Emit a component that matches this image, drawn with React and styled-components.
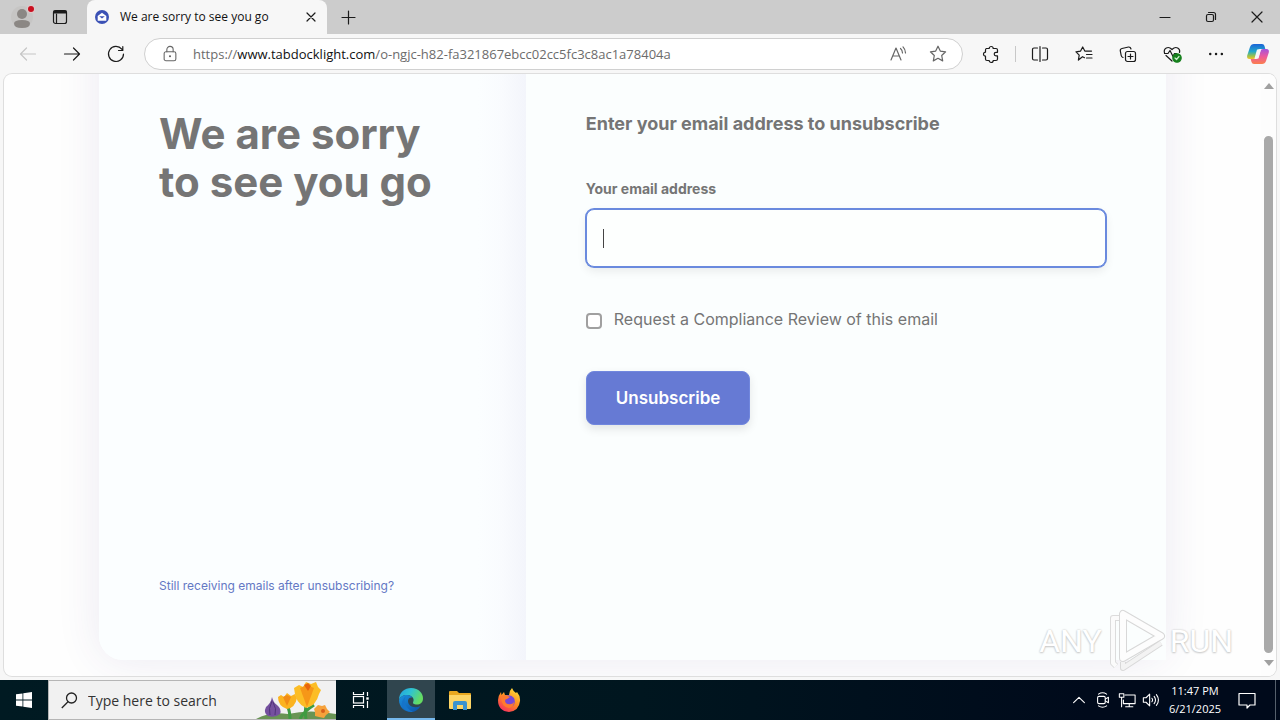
import styled, { createGlobalStyle, css } from "styled-components";

const GlobalStyle = createGlobalStyle`
  * {
    box-sizing: border-box;
  }
  body {
    margin: 0;
    font-family: "Open Sans", "Noto Sans", sans-serif;
  }
  h1, h2, p {
    margin: 0;
  }
  button {
    border: 0;
    padding: 0;
    background: none;
    font: inherit;
    color: inherit;
  }
`;

const Screen = styled.div`
  height: 100vh;
  display: flex;
  flex-direction: column;
  overflow: hidden;
  background-color: #f7f7f7;
`;

/* browser chrome */
const TabStrip = styled.div`
  height: 34px;
  flex-shrink: 0;
  display: flex;
  background-color: #cccccc;
`;

const IconButton = styled.button`
  width: ${(props) => props.$width || 44}px;
  height: ${(props) => props.$height || 34}px;
  flex-shrink: 0;
  display: flex;
  align-items: center;
  justify-content: center;
  color: ${(props) => props.$color || "#1b1b1b"};
`;

const Tab = styled.div`
  width: 240px;
  display: flex;
  align-items: center;
  padding-left: 7px;
  margin-left: 11px;
  background-color: #f7f7f7;
  border-radius: 8px 8px 0 0;
`;

const TabTitle = styled.span`
  flex: 1;
  margin-left: 10px;
  font-size: 12px;
  line-height: 16px;
  color: #111111;
  white-space: nowrap;
`;

const Spacer = styled.div`
  flex: 1;
`;

const Toolbar = styled.div`
  height: 40px;
  flex-shrink: 0;
  display: flex;
  align-items: center;
  padding: 0 2px 0 6px;
`;

const AddressBar = styled.div`
  flex: 1;
  height: 32px;
  margin: 0 6px;
  padding: 0 4px 0 16px;
  display: flex;
  align-items: center;
  background-color: white;
  border: 1px solid #d0d0d0;
  border-radius: 16px;
  color: #666666;
`;

const Url = styled.div`
  flex: 1;
  margin-left: 14px;
  font-size: 13px;
  line-height: 20px;
  color: #6c6c6c;
  white-space: nowrap;
  outline: none;

  b {
    font-weight: 400;
    color: #111111;
  }
`;

const Separator = styled.div`
  width: 1px;
  height: 16px;
  margin: 0 2px;
  background-color: #c8c8c8;
`;

/* page */
const Frame = styled.main`
  flex: 1;
  min-height: 0;
  margin: 0 4px 4px;
  display: flex;
  position: relative;
  overflow: hidden;
  background-color: #fefefe;
  border-radius: 8px;
  box-shadow: 0 0 0 1px #dedede;
`;

const Page = styled.div`
  flex: 1;
  display: flex;
  justify-content: center;
  overflow: hidden;
`;

const Card = styled.div`
  width: 85%;
  max-width: 1067px;
  margin-top: -60px;
  margin-bottom: 16px;
  display: grid;
  grid-template-columns: 2fr 3fr;
  border-radius: 24px;
  background-color: #fbfeff;
  box-shadow: 0 0 44px rgba(70, 50, 130, 0.1);
`;

const Side = styled.section`
  padding: 96px 60px 64px;
  display: flex;
  flex-direction: column;
  justify-content: space-between;
  align-items: flex-start;
  overflow: hidden;
  border-radius: 24px 0 0 24px;
  background-image: linear-gradient(to left, #f3f5fb, #f9fbfe 24px, #fbfeff 48px);
  font-family: Inter, sans-serif;
`;

const Title = styled.h1`
  font-weight: 700;
  font-size: 42px;
  line-height: 48px;
  color: #757575;
  white-space: nowrap;
`;

const HelpLink = styled.a`
  font-size: 12px;
  line-height: 20px;
  color: #6478c4;
  text-decoration: none;
`;

const Form = styled.form`
  padding: 96px 60px 64px;
  background-color: #fbfefe;
  font-family: Inter, sans-serif;
  color: #757575;
`;

const FormTitle = styled.h2`
  font-weight: 700;
  font-size: 18px;
  line-height: 28px;
`;

const Label = styled.label`
  display: block;
  margin: 41px 0 10px;
  font-weight: 700;
  font-size: 14px;
  line-height: 20px;
`;

const Field = styled.div`
  position: relative;
`;

const EmailInput = styled.input`
  display: block;
  width: 100%;
  height: 58px;
  padding: 0 16px;
  font: 16px Inter, sans-serif;
  color: #555555;
  background-color: #fdfffe;
  border: 1px solid #6a8ade;
  border-radius: 8px;
  outline: none;
  caret-color: transparent;
  box-shadow: 0 0 0 1px #6a8ade, 0 4px 10px rgba(0, 0, 0, 0.08);
`;

const Caret = styled.i`
  position: absolute;
  left: 17px;
  top: 20px;
  width: 1px;
  height: 19px;
  background-color: #444444;
`;

const CheckRow = styled.label`
  margin: 40px 0;
  display: flex;
  align-items: center;
  font-size: 16px;
  line-height: 24px;
`;

const Checkbox = styled.input`
  appearance: none;
  width: 16px;
  height: 16px;
  margin: 4px 12px 0 0;
  background-color: white;
  border: 2px solid #a0a0a0;
  border-radius: 4px;
`;

const SubmitButton = styled.button`
  height: 54px;
  padding: 0 29px;
  font-weight: 600;
  font-size: 17px;
  color: white;
  background-color: #667ad4;
  border: 1px solid #7187de;
  border-radius: 8px;
  box-shadow: 0 4px 10px rgba(0, 0, 0, 0.1);
`;

const Scrollbar = styled.div`
  width: 15px;
  padding: 9px 0 10px;
  display: flex;
  flex-direction: column;
  align-items: center;
  background-color: #fdfdfd;
`;

const Arrow = styled.div`
  border: 5px solid transparent;
  ${(props) =>
    props.$down
      ? css`
          border-top: 6px solid #a0a0a0;
          border-bottom: 0;
        `
      : css`
          border-bottom: 6px solid #a0a0a0;
          border-top: 0;
        `}
`;

const Thumb = styled.div`
  flex: 1;
  width: 9px;
  margin: 47px 0 7px;
  border-radius: 5px;
  background-color: #a9a9a9;
`;

const Watermark = styled.div`
  position: absolute;
  right: 43px;
  bottom: 2px;
  height: 66px;
  display: flex;
  align-items: center;
  gap: 4px;
  font-family: Roboto, sans-serif;
  font-size: 32px;
  color: #ffffff;
  text-shadow: 0 0 2px #c0c0c0, 0 1px 2px #cccccc;
  pointer-events: none;
`;

/* taskbar */
const Taskbar = styled.footer`
  height: 40px;
  flex-shrink: 0;
  display: flex;
  background-image: linear-gradient(to right, #001a22, #00161f 50%, #000a1b 85%);
  color: white;
`;

const TaskButton = styled(IconButton)`
  width: ${(props) => props.$width || 49}px;
  height: 40px;
  color: white;
  ${(props) =>
    props.$active &&
    css`
      background-color: #30454e;
      box-shadow: inset 0 -2px 0 #76b9ed;
    `}
`;

const SearchBox = styled.label`
  width: 288px;
  display: flex;
  align-items: center;
  padding-left: 12px;
  overflow: hidden;
  background-color: #f1f1f1;
  border: 1px solid #b5b5b5;
  border-right: 0;
  color: #222222;
`;

const SearchInput = styled.input`
  flex: 1;
  min-width: 0;
  margin-left: 10px;
  padding: 0;
  border: 0;
  outline: none;
  background: none;
  font: 14px "Open Sans", sans-serif;

  &::placeholder {
    color: #333333;
    opacity: 1;
  }
`;

const Clock = styled.time`
  width: 64px;
  text-align: center;
  font-size: 11px;
  line-height: 18px;
  padding-top: 2px;
  white-space: nowrap;
`;

const ShowDesktop = styled.button`
  width: 5px;
  margin-left: 8px;
  border-left: 1px solid #55606c;
`;

function Line({ size = 20, width = 1.2, children }) {
  return (
    <svg
      width={size}
      height={size}
      viewBox="0 0 20 20"
      fill="none"
      stroke="currentColor"
      strokeWidth={width}
      strokeLinecap="round"
      strokeLinejoin="round"
      aria-hidden="true"
    >
      {children}
    </svg>
  );
}

const STAR = "M10 2.2l2.3 4.9 5.3.7-3.9 3.7 1 5.4-4.7-2.6-4.7 2.6 1-5.4-3.9-3.7 5.3-.7z";

function Tabs() {
  return (
    <TabStrip>
      <IconButton aria-label="Profile">
        <svg width="26" height="26" viewBox="0 0 26 26">
          <circle cx="13" cy="13" r="11" fill="#c6c5c4" />
          <circle cx="13" cy="10" r="5" fill="#8b8784" />
          <path d="M5 19.5Q5 16 13 16t8 3.5Q21 24 13 24T5 19.500z" fill="#8b8784" />
          <circle cx="22" cy="5" r="4" fill="#e0c8c8" />
          <circle cx="22" cy="5" r="3" fill="#c90f1f" />
        </svg>
      </IconButton>
      <IconButton $width={32} aria-label="Tab actions">
        <Line width={1.2}>
          <rect x="3.500" y="3.500" width="13" height="13" rx="2" />
          <path d="M3.500 5h13" strokeWidth="3" strokeLinecap="butt" />
          <path d="M6.500 7v9" />
        </Line>
      </IconButton>
      <Tab>
        <svg width="16" height="16" viewBox="0 0 16 16">
          <circle cx="8" cy="8" r="7" fill="#3b51b5" />
          <path d="M3.700 7L8 3.800 12.300 7v4.700H3.700z" fill="white" />
          <path d="M5.200 7.300L8 9.500l2.800-2.200z" fill="#3b51b5" />
        </svg>
        <TabTitle>We are sorry to see you go</TabTitle>
        <IconButton $width={32} aria-label="Close tab">
          <Line>
            <path d="M6 6l8 8M14 6l-8 8" />
          </Line>
        </IconButton>
      </Tab>
      <IconButton $width={42} aria-label="New tab">
        <Line>
          <path d="M10.500 4v13M4 10.500h13" />
        </Line>
      </IconButton>
      <Spacer />
      <IconButton $width={46} aria-label="Minimize">
        <Line>
          <path d="M5 10.500h10" />
        </Line>
      </IconButton>
      <IconButton $width={46} aria-label="Restore">
        <Line>
          <rect x="5.500" y="7.500" width="7" height="7" rx="1.500" />
          <path d="M7.500 5.500h5q2 0 2 2V12.500" />
        </Line>
      </IconButton>
      <IconButton $width={46} aria-label="Close">
        <Line>
          <path d="M5 5l10 10M15 5L5 15" />
        </Line>
      </IconButton>
    </TabStrip>
  );
}

function BrowserToolbar() {
  return (
    <Toolbar>
      <IconButton $color="#c6c6c6" aria-label="Back">
        <Line>
          <path d="M17.500 10H2.500M8.500 4l-6 6 6 6" />
        </Line>
      </IconButton>
      <IconButton aria-label="Forward">
        <Line>
          <path d="M2.500 10h15M11.500 4l6 6-6 6" />
        </Line>
      </IconButton>
      <IconButton aria-label="Refresh">
        <Line>
          <path d="M17.500 10A7.500 7.500 0 1 1 15.800 5.200L16.500 6M16.800 2.500V6.500H12.500" />
        </Line>
      </IconButton>
      <AddressBar>
        <Line size={18}>
          <rect x="3.500" y="7.500" width="13" height="10" rx="2" />
          <path d="M6.500 7.500V5a3.500 3.500 0 0 1 7 0v2.500" />
          <circle cx="10" cy="12.500" r=".6" fill="currentColor" />
        </Line>
        <Url contentEditable suppressContentEditableWarning role="textbox" aria-label="Address" spellCheck={false}>
          https://<b>www.tabdocklight.com</b>/o-ngjc-h82-fa321867ebcc02cc5fc3c8ac1a78404a
        </Url>
        <IconButton $width={40} $height={30} $color="#666666" aria-label="Read aloud">
          <Line>
            <path d="M3 16L8 4l5 12M5 12h6M12.500 4.500q2 1.800 2 4.500M15 2.800q2.500 2.500 2.500 6.200" />
          </Line>
        </IconButton>
        <IconButton $width={40} $height={30} $color="#666666" aria-label="Add to favorites">
          <Line>
            <path d={STAR} />
          </Line>
        </IconButton>
      </AddressBar>
      <IconButton aria-label="Extensions">
        <Line>
          <path d="M5.500 4.500h2.700a2 2 0 0 1 4 0H15a1.500 1.500 0 0 1 1.500 1.500v2.300H15a1.800 1.800 0 0 0 0 3.600h1.500V15a1.500 1.500 0 0 1-1.500 1.500h-2.800a2 2 0 0 1-4 0H6A1.500 1.500 0 0 1 4.500 15v-2.800a2 2 0 0 1 0-4V6a1.500 1.500 0 0 1 1-1.500z" />
        </Line>
      </IconButton>
      <Separator />
      <IconButton aria-label="Split screen">
        <Line>
          <path d="M7.500 4H4A1.500 1.500 0 0 0 2.500 5.500v9A1.500 1.500 0 0 0 4 16h3.500M12.500 4H16A1.500 1.500 0 0 1 17.500 5.500v9A1.500 1.500 0 0 1 16 16h-3.500M10 2.500v15" />
        </Line>
      </IconButton>
      <IconButton aria-label="Favorites">
        <Line>
          <path d="M10.500 13.700L8.500 12.700 4.400 16l.8-4.900L2 7.800l4.600-.7L8.700 3l2.100 4.100h6.700M12.500 10.500h5.500M12.500 14h5.500" />
        </Line>
      </IconButton>
      <IconButton aria-label="Collections">
        <Line>
          <rect x="7.500" y="7.500" width="10" height="10" rx="2" />
          <path d="M12.500 10v5M10 12.500h5M5 13.500Q3.500 13 3.200 11.500L2.300 6.800Q2 5 4 4.500L10.500 3Q12.500 2.800 13 5" />
        </Line>
      </IconButton>
      <IconButton aria-label="Browser essentials">
        <Line>
          <path d="M2.500 9Q1.500 5.500 4.300 4T10 5.500Q13 2.500 15.700 4t1.800 4.500M4 11.500l6 5.500M2.500 9.500h3.500l2-3 3 6 1.500-3h2" />
          <circle cx="15" cy="14" r="4.200" fill="#16801d" stroke="#16801d" />
          <path d="M13 14l1.500 1.500L17 12.500" stroke="#c9efcb" />
        </Line>
      </IconButton>
      <IconButton aria-label="Settings and more">
        <Line>
          <path d="M4.200 10h.1M10 10h.1M15.800 10h.1" strokeWidth="2.400" />
        </Line>
      </IconButton>
      <IconButton $width={40} aria-label="Copilot">
        <svg width="24" height="24" viewBox="0 0 24 24">
          <defs>
            <linearGradient id="cool" x1="0" y1="0" x2="0" y2="1">
              <stop offset="0" stopColor="#1a63d8" />
              <stop offset=".5" stopColor="#22a9c9" />
              <stop offset=".8" stopColor="#9bc34a" />
              <stop offset="1" stopColor="#f5c12c" />
            </linearGradient>
            <linearGradient id="warm" x1="0" y1="0" x2="0" y2="1">
              <stop offset="0" stopColor="#a353dd" />
              <stop offset=".5" stopColor="#ed5a9c" />
              <stop offset="1" stopColor="#fb7f4d" />
            </linearGradient>
          </defs>
          <path d="M8 2h8q2 0 2.500 2l.8 3H14q-2 0-2.600 2l-2 6.500Q9 17 7 17H3.500Q.5 17 1.200 13.500L4 5Q5 2 8 2z" fill="url(#cool)" />
          <path d="M16 22H8q-2 0-2.500-2l-.8-3H10q2 0 2.600-2l2-6.500Q15 7 17 7h3.500q3 0 2.300 3.500L20 19q-1 3-4 3z" fill="url(#warm)" />
          <path d="M11 7.500h4l-2.500 9h-4z" fill="#f7f7f7" />
        </svg>
      </IconButton>
    </Toolbar>
  );
}

function Unsubscribe() {
  return (
    <Card>
      <Side>
        <Title>
          We are sorry
          <br />
          to see you go
        </Title>
        <HelpLink href="#help">Still receiving emails after unsubscribing?</HelpLink>
      </Side>
      <Form onSubmit={(e) => e.preventDefault()}>
        <FormTitle>Enter your email address to unsubscribe</FormTitle>
        <Label htmlFor="email">Your email address</Label>
        <Field>
          <EmailInput id="email" type="email" />
          <Caret />
        </Field>
        <CheckRow>
          <Checkbox type="checkbox" />
          Request a Compliance Review of this email
        </CheckRow>
        <SubmitButton type="submit">Unsubscribe</SubmitButton>
      </Form>
    </Card>
  );
}

function PlayLogo() {
  return (
    <svg width="60" height="66" viewBox="0 0 60 66" fill="none" strokeLinejoin="round">
      <path d="M13 10H7v45l3 3" stroke="#dcdcdc" strokeWidth="6" />
      <path d="M13 10H7v45l3 3" stroke="#fbfbfb" strokeWidth="4" />
      <path d="M17 6v44l38-22z" stroke="#d8d8d8" strokeWidth="8" />
      <path d="M17 6v44l38-22z" stroke="#fdfdfd" strokeWidth="6" />
      <path d="M17 54v6l38-25" stroke="#d8d8d8" strokeWidth="6" />
      <path d="M17 54v6l38-25" stroke="#f3f3f3" strokeWidth="4" />
    </svg>
  );
}

function Flowers() {
  return (
    <svg width="80" height="38" viewBox="0 0 80 38">
      <path d="M0 38Q14 30 32 33 54 28 80 33v5z" fill="#699454" />
      <path d="M34 38Q34 30 31 24M50 38Q48 27 52 17M44 38Q47 31 58 24" stroke="#3f9b42" strokeWidth="3" fill="none" />
      <path d="M16 16q-1 6-6 10-3 6 2 9 7 2 12-2 2-5-3-9-4-3-5-8z" fill="#75509f" />
      <path d="M16 20q-4 8-2 14M17 21q4 7 2 13" stroke="#4f3479" fill="none" />
      <path d="M22 16l3-2 3 2 3-4 4 3 4-2 2 4q-2 10-10 11-9-3-9-12z" fill="#fbb320" />
      <path d="M27 16l4 9 4-9-4-2z" fill="#f18c17" />
      <path d="M38 7l5-3 4 2 3-5 5 2 5-2 2 5 3 3-2 4q-3 12-13 14-11-5-12-20z" fill="#fcbd25" />
      <path d="M44 7l7 19 7-19-7-3z" fill="#f69718" />
      <path d="M48 4l4-2 3 3-3 5z" fill="#e8660d" />
      <path d="M62 24l4 1 3-1 2 4 3 3-4 3-2 3-5-1-4-1v-4l-1-3z" fill="#f6a23b" />
      <circle cx="67" cy="30" r="2" fill="#d9601a" />
    </svg>
  );
}

function WindowsTaskbar() {
  return (
    <Taskbar>
      <TaskButton $width={48} aria-label="Start">
        <svg width="16" height="16" viewBox="0 0 16 16" fill="white">
          <path d="M0 2.300l6.500-.9v6.200H0zM7.300 1.300L16 0v7.600H7.300zM0 8.400h6.500v6.200L0 13.700zM7.300 8.400H16V16l-8.700-1.300z" />
        </svg>
      </TaskButton>
      <SearchBox>
        <svg width="17" height="17" viewBox="0 0 17 17" fill="none" stroke="#222222" strokeWidth="1.300">
          <circle cx="10.500" cy="6" r="5" />
          <path d="M7 9.700L.8 16" />
        </svg>
        <SearchInput placeholder="Type here to search" aria-label="Search" />
        <Flowers />
      </SearchBox>
      <TaskButton $width={51} aria-label="Task view">
        <svg width="20" height="18" viewBox="0 0 20 18" fill="none" stroke="white" strokeWidth="1.200">
          <path d="M1.500 1v2.500h10V1M1.500 17v-2.500h10V17M15.500 1v4M15.500 10v7" />
          <rect x="1.500" y="5.500" width="10" height="6.500" />
          <path d="M14.300 7.500h2.400" strokeWidth="2.400" />
        </svg>
      </TaskButton>
      <TaskButton $width={48} $active aria-label="Microsoft Edge">
        <svg width="26" height="26" viewBox="0 0 26 26">
          <defs>
            <linearGradient id="edgeTop" x1="0" y1="0" x2="1" y2=".4">
              <stop offset="0" stopColor="#229fe0" />
              <stop offset=".5" stopColor="#2fc3d2" />
              <stop offset="1" stopColor="#65dc62" />
            </linearGradient>
            <linearGradient id="edgeLow" x1="0" y1="0" x2="1" y2="1">
              <stop offset="0" stopColor="#1b91df" />
              <stop offset="1" stopColor="#0a4fa4" />
            </linearGradient>
          </defs>
          <path d="M1 13C1 5 7 1 13 1c8 0 12 5.500 12 10.500 0 4-3 6-6 6-3.500 0-4.500-1.500-3.800-2.600C17 11 13 8 9 8c-4 0-7 2-8 5z" fill="url(#edgeTop)" />
          <path d="M1 13c1-3 4-5 8-5 2.500 0 4.500 1 5.500 2.500-3-.5-4.500 1.500-4.500 3.500 0 5 6 8 12.500 5C20 23 17 25 13 25 6 25 1 19.500 1 13z" fill="url(#edgeLow)" />
          <path d="M9 8q-4 4-1.500 9.500T15 24.800Q8 25.500 4.500 20 2 14 9 8z" fill="#1674c9" />
        </svg>
      </TaskButton>
      <TaskButton aria-label="File Explorer">
        <svg width="22" height="20" viewBox="0 0 22 20">
          <path d="M0 2q0-1 1-1h7l2 2h11q1 0 1 1v14H0z" fill="#e9a820" />
          <path d="M0 5h22v13q0 1-1 1H1q-1 0-1-1z" fill="#fdd566" />
          <path d="M4 20v-7q0-2 2-2h10q2 0 2 2v7h-4v-5H8v5z" fill="#3b93cf" />
        </svg>
      </TaskButton>
      <TaskButton aria-label="Firefox">
        <svg width="24" height="24" viewBox="0 0 24 24">
          <defs>
            <linearGradient id="fox" x1=".8" y1="0" x2=".2" y2="1">
              <stop offset="0" stopColor="#ffe23c" />
              <stop offset=".5" stopColor="#ff8a20" />
              <stop offset="1" stopColor="#f52a64" />
            </linearGradient>
          </defs>
          <path d="M15 0q1 3 4 5l1-1q3.500 4 3 9-1 10-11 11Q1 23 1 12q0-4 3-8l.5 3L7 4l1 3 4 0q0-4 3-7z" fill="url(#fox)" />
          <path d="M8 8q6-2 9 2 2 5-1 8-5 2-8-1-3-5 0-9z" fill="#7748d7" />
          <path d="M4 8q5-2 9 1l-3 2q-2 0-2 2 1 4 6 3 2 0 3-2 0 5-5 6-8-1-8-12z" fill="#ff7a2e" />
        </svg>
      </TaskButton>
      <Spacer />
      <TaskButton $width={24} aria-label="Show hidden icons">
        <Line size={18}>
          <path d="M4 13l6-6 6 6" />
        </Line>
      </TaskButton>
      <TaskButton $width={24} aria-label="Meet now">
        <Line size={18}>
          <rect x="4" y="6" width="8.500" height="8" rx="1.500" />
          <path d="M12.500 9l3.500-2v6l-3.500-2M5 3.500q4.500-3 9 0M5 16.500q4.500 3 9 0" />
        </Line>
      </TaskButton>
      <TaskButton $width={24} aria-label="Network">
        <Line size={18}>
          <path d="M8 4.500h11V14H6v-4M12.500 14v3.500M8.500 17.500h8M1.500 3h5v4h-5zM4 7v10.500" />
        </Line>
      </TaskButton>
      <TaskButton $width={24} aria-label="Volume">
        <Line size={18}>
          <path d="M1.500 7.500h3l4-4v13l-4-4h-3zM11 8q1.500 2 0 4M13.500 6q3 4 0 8M16 4q4.500 6 0 12" />
        </Line>
      </TaskButton>
      <Clock>
        11:47 PM
        <br />
        6/21/2025
      </Clock>
      <TaskButton $width={40} aria-label="Notifications">
        <Line size={20}>
          <path d="M2 3.500h16v11.500h-5l-3 3v-3H2z" />
        </Line>
      </TaskButton>
      <ShowDesktop aria-label="Show desktop" />
    </Taskbar>
  );
}

export default function App() {
  return (
    <Screen>
      <GlobalStyle />
      <Tabs />
      <BrowserToolbar />
      <Frame>
        <Page>
          <Unsubscribe />
        </Page>
        <Scrollbar>
          <Arrow />
          <Thumb />
          <Arrow $down />
        </Scrollbar>
        <Watermark>
          <span>ANY</span>
          <PlayLogo />
          <span>RUN</span>
        </Watermark>
      </Frame>
      <WindowsTaskbar />
    </Screen>
  );
}
